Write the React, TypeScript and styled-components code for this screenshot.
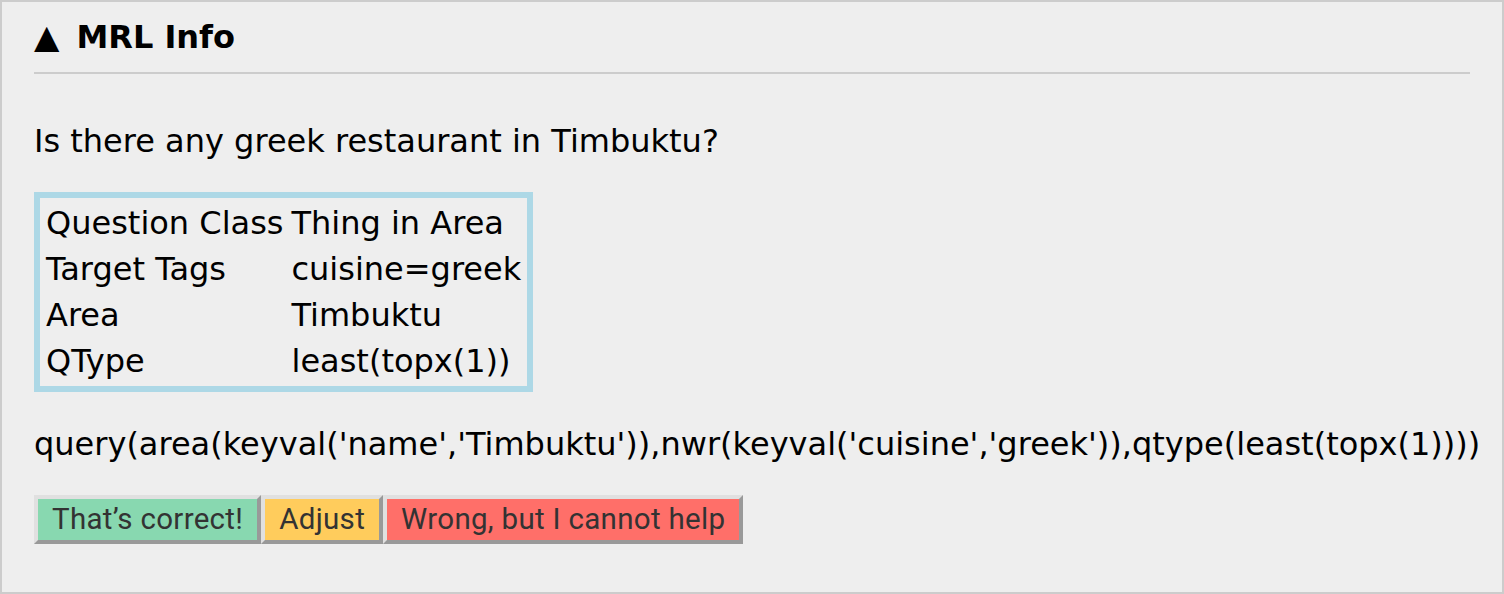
import React from 'react'
import styled, { createGlobalStyle } from 'styled-components'

const GlobalStyle = createGlobalStyle`
html, body {
  margin: 0;
  padding: 0;
  background: #ffffff;
}
body {
  font-family: "DejaVu Sans", sans-serif;
  font-size: 32px;
  color: #000;
}
`

const rows: [string, string][] = [
  ['Question Class', 'Thing in Area'],
  ['Target Tags', 'cuisine=greek'],
  ['Area', 'Timbuktu'],
  ['QType', 'least(topx(1))'],
]

const query =
  "query(area(keyval('name','Timbuktu')),nwr(keyval('cuisine','greek')),qtype(least(topx(1))))"

const App = () => {
  return (
    <>
      <GlobalStyle />
      <Panel>
        <Header>
          <Arrow>▲</Arrow>
          <Title>MRL Info</Title>
        </Header>
        <Question>Is there any greek restaurant in Timbuktu?</Question>
        <InfoTable>
          <tbody>
            {rows.map(([k, v]) => (
              <tr key={k}>
                <Cell>{k}</Cell>
                <Cell>{v}</Cell>
              </tr>
            ))}
          </tbody>
        </InfoTable>
        <Query>{query}</Query>
        <Actions>
          <ActionButton bg="#88d8b0">That’s correct!</ActionButton>
          <ActionButton bg="#ffcc5c">Adjust</ActionButton>
          <ActionButton bg="#ff6f69">Wrong, but I cannot help</ActionButton>
        </Actions>
      </Panel>
    </>
  )
}

export default App

const Panel = styled.div`
width: 1504px;
height: 594px;
box-sizing: border-box;
border: 2px solid #cccccc;
background: #eeeeee;
padding: 0 32px;
overflow: hidden;
`

const Header = styled.div`
display: flex;
align-items: baseline;
margin-top: 16px;
padding-bottom: 16px;
border-bottom: 2px solid #cccccc;
font-weight: bold;
line-height: 37px;
`

const Arrow = styled.span`
font-size: 33px;
margin-right: 17px;
`

const Title = styled.span`
font-size: 32px;
`

const Question = styled.p`
margin: 48px 0 32px;
line-height: normal;
`

const InfoTable = styled.table`
border: 6px solid lightblue;
border-spacing: 4px;
border-collapse: separate;
font-size: 32px;
`

const Cell = styled.td`
padding: 2px;
line-height: 38px;
white-space: nowrap;
`

const Query = styled.p`
margin: 33px 0 32px;
line-height: normal;
white-space: nowrap;
`

const Actions = styled.div`
display: flex;
`

const ActionButton = styled.button<{ bg: string }>`
height: 49px;
box-sizing: border-box;
padding: 0 14px;
margin: 0;
border: 4px solid;
border-color: #e0e0e0 #999999 #999999 #e0e0e0;
background: ${(p) => p.bg};
color: #333333;
font-family: Roboto, "Noto Sans", sans-serif;
font-size: 29.5px;
letter-spacing: 0.3px;
line-height: 1;
cursor: pointer;
`
